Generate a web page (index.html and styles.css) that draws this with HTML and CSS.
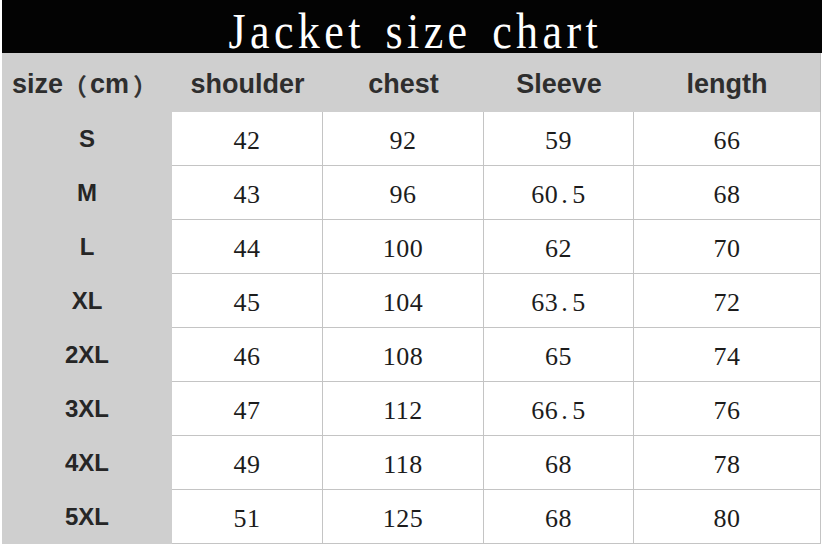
FILE: index.html
```html
<!DOCTYPE html>
<html>
<head>
<meta charset="utf-8">
<link rel="stylesheet" href="styles.css">
</head>
<body>
<div class="chart">
  <div class="title"><span class="title-text">Jacket size chart</span></div>
  <div class="grid">
    <div class="hd first">size<span class="paren-l">（</span>cm<span class="paren-r">）</span></div>
    <div class="hd">shoulder</div>
    <div class="hd">chest</div>
    <div class="hd">Sleeve</div>
    <div class="hd last">length</div>

    <div class="sz">S</div><div class="num">42</div><div class="num">92</div><div class="num">59</div><div class="num">66</div>
    <div class="sz">M</div><div class="num">43</div><div class="num">96</div><div class="num">60<span class="dot">.</span>5</div><div class="num">68</div>
    <div class="sz">L</div><div class="num">44</div><div class="num">100</div><div class="num">62</div><div class="num">70</div>
    <div class="sz">XL</div><div class="num">45</div><div class="num">104</div><div class="num">63<span class="dot">.</span>5</div><div class="num">72</div>
    <div class="sz">2XL</div><div class="num">46</div><div class="num">108</div><div class="num">65</div><div class="num">74</div>
    <div class="sz">3XL</div><div class="num">47</div><div class="num">112</div><div class="num">66<span class="dot">.</span>5</div><div class="num">76</div>
    <div class="sz">4XL</div><div class="num">49</div><div class="num">118</div><div class="num">68</div><div class="num">78</div>
    <div class="sz">5XL</div><div class="num">51</div><div class="num">125</div><div class="num">68</div><div class="num">80</div>
  </div>
</div>
</body>
</html>
```

FILE: styles.css
```css
html, body {
  margin: 0;
  padding: 0;
  background: #ffffff;
}

.chart {
  width: 820px;
  margin-left: 2px;
}

.title {
  height: 53px;
  background: #030303;
  color: #ffffff;
  font-family: "Liberation Serif", serif;
  font-size: 50px;
  line-height: 44px;
  padding-top: 9px;
  box-sizing: border-box;
  text-align: center;
}

.title-text {
  display: inline-block;
  letter-spacing: 5px;
  word-spacing: 6px;
  transform: scaleX(0.88);
  margin-left: 6px;
}

.grid {
  display: grid;
  grid-template-columns: 170px 151px 161px 150px 187px;
  grid-template-rows: 59px repeat(8, 54px);
}

.hd {
  background: #cfcfcf;
  color: #2e2e2e;
  font-family: "Liberation Sans", Arial, sans-serif;
  font-weight: bold;
  font-size: 27px;
  display: flex;
  align-items: center;
  justify-content: center;
  padding-top: 3px;
  box-sizing: border-box;
}

.hd.first {
  justify-content: flex-start;
  padding-left: 10px;
}

.hd.last {
  border-right: 1px solid #bdbdbd;
}

.paren-l,
.paren-r {
  font-family: "Noto Sans CJK SC", sans-serif;
  font-weight: bold;
  font-size: 24px;
  color: #333333;
}

.paren-l {
  margin-left: 0;
  margin-right: 3px;
}

.paren-r {
  margin-left: 4px;
}

.sz {
  background: #cfcfcf;
  color: #262626;
  font-family: "Liberation Sans", Arial, sans-serif;
  font-weight: bold;
  font-size: 24px;
  display: flex;
  align-items: center;
  justify-content: center;
  padding-bottom: 1px;
  box-sizing: border-box;
}

.num {
  background: #ffffff;
  color: #1c1c1c;
  font-family: "Liberation Serif", serif;
  font-size: 26px;
  letter-spacing: 0.5px;
  display: flex;
  align-items: center;
  justify-content: center;
  padding-top: 4px;
  border-right: 1px solid #c4c4c4;
  border-bottom: 1px solid #c4c4c4;
  box-sizing: border-box;
}

.dot {
  margin: 0 4px 0 3px;
}
```
